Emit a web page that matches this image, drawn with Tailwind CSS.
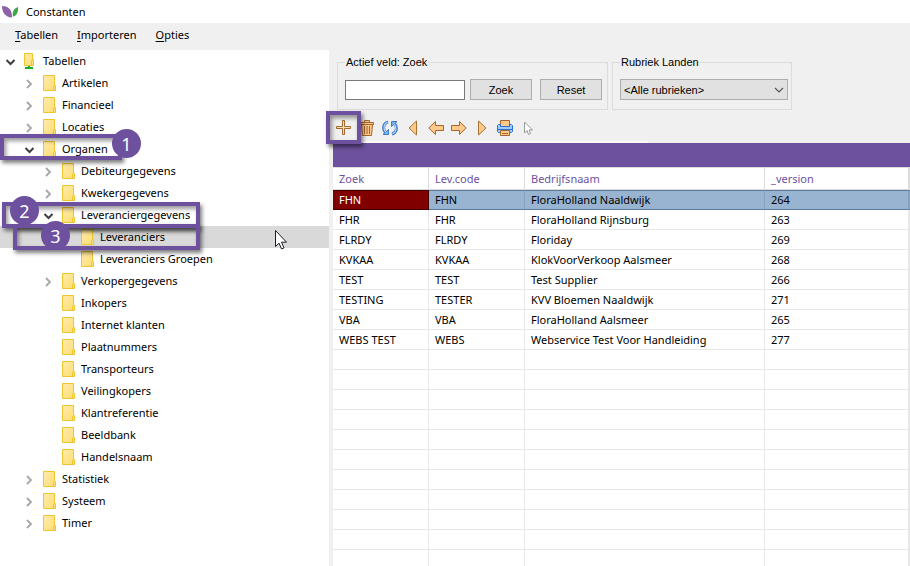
<!DOCTYPE html>
<html lang="nl">
<head>
<meta charset="utf-8">
<title>Constanten</title>
<meta name="viewport" content="width=device-width, initial-scale=1">
<script src="https://cdn.jsdelivr.net/npm/@tailwindcss/browser@4"></script>
</head>
<body class="relative flex h-screen flex-col overflow-hidden bg-white font-['Noto_Sans','Open_Sans',sans-serif] text-[11px] leading-4 text-black">

<svg class="absolute size-0" aria-hidden="true">
  <defs>
    <linearGradient id="fold" x1="0" y1="0" x2="1" y2="1"><stop offset="0" stop-color="#ffebae"/><stop offset="1" stop-color="#fddd70"/></linearGradient>
    <symbol id="folder" viewBox="0 0 13 16"><path d="M.5.5h11v10h1v5H.5z" fill="url(#fold)" stroke="#ecc52f"/><path d="M10.500 15.500v-4l1-1" fill="none" stroke="#ecc52f"/></symbol>
    <symbol id="root" viewBox="0 0 13 16"><path d="M.5.5h8v6h1v6h-9z" fill="url(#fold)" stroke="#ecc52f"/><path d="M7.500 12v-4l1-1" fill="none" stroke="#ecc52f"/><path d="M4 13h2v1h3v2H1v-2h3z" fill="#17b01c"/></symbol>
    <symbol id="closed" viewBox="0 0 10 10"><path d="M3 1l4 4-4 4" fill="none" stroke="#a6a6a6" stroke-width="1.800"/></symbol>
    <symbol id="open" viewBox="0 0 10 10"><path d="M1.500 3L5.500 7l4-4" fill="none" stroke="#404040" stroke-width="2"/></symbol>
  </defs>
</svg>

<header class="flex h-[23px] shrink-0 items-center gap-2 pl-0.5">
  <svg class="h-3 w-4" viewBox="0 0 16 12"><path d="M0 0c7 0 10 4 10 11.500C3 11 0 6.500 0 0z" fill="#8d62a8"/><path d="M16 1c.3 5.500-1 8.500-5 9.800C9.800 5.500 12 2 16 1z" fill="#3fa64a"/></svg>
  <h1>Constanten</h1>
</header>

<nav class="flex h-[27px] shrink-0 items-center gap-[19px] bg-[#f0f0f0] pb-1 pl-[15px]">
  <a href="#"><u class="underline-offset-2">T</u>abellen</a>
  <a href="#"><u class="underline-offset-2">I</u>mporteren</a>
  <a href="#"><u class="underline-offset-2">O</u>pties</a>
</nav>

<main class="flex min-h-0 flex-1 bg-[#f0f0f0]">
  <ul id="tree" class="w-[329px] shrink-0 overflow-hidden bg-white"></ul>

  <section class="flex min-w-0 flex-1 flex-col pl-1">
    <div class="flex shrink-0 gap-1 pt-1 pl-1 font-['Liberation_Sans',sans-serif] leading-4">
      <fieldset class="border border-[#dcdcdc] pr-[5px] pb-[9px] pl-[7px]">
        <legend class="px-px">Actief veld: Zoek</legend>
        <div class="flex items-center gap-2 pt-[9px]">
          <input aria-label="Actief veld: Zoek" class="-mr-[3px] h-5 w-[120px] border border-[#7a7a7a] bg-white px-1">
          <button class="h-[21px] w-[62px] border border-[#adadad] bg-[#e1e1e1]">Zoek</button>
          <button class="h-[21px] w-[62px] border border-[#adadad] bg-[#e1e1e1]">Reset</button>
        </div>
      </fieldset>
      <fieldset class="border border-[#dcdcdc] pr-[3px] pb-[9px] pl-[7px]">
        <legend class="px-px">Rubriek Landen</legend>
        <div class="relative pt-[9px]">
          <select aria-label="Rubriek Landen" class="block h-[21px] w-[168px] appearance-none border border-[#adadad] bg-[#e1e1e1] pl-[3px]"><option>&lt;Alle rubrieken&gt;</option></select>
          <svg class="pointer-events-none absolute right-1 bottom-1.5 h-2 w-2.5" viewBox="0 0 10 8"><path d="M1 2l4 4 4-4" fill="none" stroke="#555" stroke-width="1.200"/></svg>
        </div>
      </fieldset>
    </div>

    <div class="-ml-px flex h-[31px] shrink-0 items-center pt-1">
      <button aria-label="Toevoegen" class="flex w-[23px] justify-center"><svg class="h-4 w-4" viewBox="0 0 16 16"><path d="M6.500.5h2v6h6v2h-6v6h-2v-6h-6v-2h6z" fill="#ffe0b8" stroke="#a5662f"/></svg></button>
      <button aria-label="Verwijderen" class="flex w-[23px] justify-center"><svg class="h-4 w-4" viewBox="0 0 16 16" fill="#ffc98b" stroke="#a5662f"><path d="M5.500 2.500v-2h5v2M2.500 4.500h11l-1 11h-9z"/><path d="M1.500 2.500h13v2h-13z"/><path d="M5.500 6v8M8 6v8M10.500 6v8"/></svg></button>
      <button aria-label="Vernieuwen" class="flex w-[23px] justify-center"><svg class="h-4 w-4" viewBox="0 0 16 16" fill="none"><path d="M6 1.800C1 3.500.5 9 3.500 12.500M10 14.200c5-1.700 5.500-7.200 2.500-10.700" stroke="#3c7bcb" stroke-width="3"/><path d="M1 14.500h5.500V9.500zM15 1.500H9.500v5z" fill="#7fb2ec" stroke="#3c7bcb"/><path d="M5.500 2.300C1.500 4 1 9 3.800 12.300M10.500 13.700c4-1.700 4.500-6.700 1.700-10" stroke="#b4d6fa" stroke-width="1.200"/></svg></button>
      <button aria-label="Eerste" class="flex w-[23px] justify-center"><svg class="h-4 w-4" viewBox="0 0 16 16"><path d="M11.500 1v14L4 8z" fill="#ffc98b" stroke="#a5752f"/></svg></button>
      <button aria-label="Vorige" class="flex w-[23px] justify-center"><svg class="h-4 w-4" viewBox="0 0 16 16"><path d="M.8 8l6.700-6.500v4h8v5h-8v4z" fill="#ffc98b" stroke="#a5662f"/></svg></button>
      <button aria-label="Volgende" class="flex w-[23px] justify-center"><svg class="h-4 w-4" viewBox="0 0 16 16"><path d="M15.200 8L8.500 1.500v4h-8v5h8v4z" fill="#ffc98b" stroke="#a5662f"/></svg></button>
      <button aria-label="Laatste" class="flex w-[23px] justify-center"><svg class="h-4 w-4" viewBox="0 0 16 16"><path d="M4.500 1v14L12 8z" fill="#ffc98b" stroke="#a5752f"/></svg></button>
      <button aria-label="Afdrukken" class="flex w-[23px] justify-center"><svg class="h-4 w-4" viewBox="0 0 16 16"><path d="M3.500.5h9v6h-9z" fill="#ffc98b" stroke="#a5662f"/><path d="M1.500 4.500h2v2h9v-2h2l1 1v6l-1 1h-13l-1-1v-6z" fill="#9ccbff" stroke="#2f6fd0"/><path d="M1 9.500h14" stroke="#2f6fd0"/><path d="M3.500 10.500h9v5h-9z" fill="#ffc98b" stroke="#a5662f"/><path d="M5 13.500h6" stroke="#a5662f"/></svg></button>
      <button aria-label="Selecteren" class="flex w-[23px] justify-center"><svg class="h-4 w-4" viewBox="0 0 16 16"><path d="M4.500 2v11l2.500-2.500 1.500 4 2-1-1.500-3.500h3.500z" fill="#fff" stroke="#999"/></svg></button>
    </div>
    <div class="h-0.5 w-[315px] shrink-0 bg-[#fafafa]"></div>

    <div class="flex min-h-0 flex-1 flex-col overflow-hidden bg-white">
      <div class="h-6 shrink-0 bg-[#6d519e]"></div>
      <table class="w-full table-fixed border-separate border-spacing-0 text-left">
        <colgroup><col class="w-24"><col class="w-24"><col class="w-60"><col class="w-36"><col></colgroup>
        <thead><tr id="head"></tr></thead>
        <tbody id="rows"></tbody>
      </table>
    </div>
  </section>
</main>

<!-- Numbered step markers over the window -->
<div class="pointer-events-none absolute inset-0">
  <div class="absolute top-[134px] left-0 h-[26px] w-[122px] border-4 border-[#6d519e] shadow-[2px_3px_4px_rgba(0,0,0,.5),inset_2px_3px_4px_rgba(0,0,0,.4)]"></div>
  <div class="absolute top-[202px] left-0.5 h-[26px] w-[198px] border-4 border-[#6d519e] shadow-[2px_3px_4px_rgba(0,0,0,.5),inset_2px_3px_4px_rgba(0,0,0,.4)]"></div>
  <div class="absolute top-[224px] left-[13px] h-[26px] w-[187px] border-4 border-[#6d519e] shadow-[2px_3px_4px_rgba(0,0,0,.5),inset_2px_3px_4px_rgba(0,0,0,.4)]"></div>
  <div class="absolute top-[111px] left-[326px] h-[33px] w-[35px] border-4 border-[#6d519e] shadow-[2px_3px_4px_rgba(0,0,0,.5),inset_2px_3px_4px_rgba(0,0,0,.4)]"></div>
  <div class="absolute top-[129px] left-[112px] flex size-[29px] items-center justify-center rounded-full bg-[#6d519e] text-[18px] text-white">1</div>
  <div class="absolute top-[196px] left-[10px] flex size-[29px] items-center justify-center rounded-full bg-[#6d519e] text-[18px] text-white">2</div>
  <div class="absolute top-[221px] left-[41px] flex size-[29px] items-center justify-center rounded-full bg-[#6d519e] text-[18px] text-white">3</div>
  <svg class="absolute top-[230px] left-[275px] h-5 w-3" viewBox="0 0 12 20"><path d="M.5.5v16l3.500-3.400 2.500 5.800 2.500-1-2.500-5.700h5z" fill="#fff" stroke="#1c1c28"/></svg>
</div>

<script>
const tree = [[0,'Tabellen','open'],[1,'Artikelen','closed'],[1,'Financieel','closed'],[1,'Locaties','closed'],[1,'Organen','open'],[2,'Debiteurgegevens','closed'],[2,'Kwekergegevens','closed'],[2,'Leveranciergegevens','open'],[3,'Leveranciers'],[3,'Leveranciers Groepen'],[2,'Verkopergegevens','closed'],[2,'Inkopers'],[2,'Internet klanten'],[2,'Plaatnummers'],[2,'Transporteurs'],[2,'Veilingkopers'],[2,'Klantreferentie'],[2,'Beeldbank'],[2,'Handelsnaam'],[1,'Statistiek','closed'],[1,'Systeem','closed'],[1,'Timer','closed']];
const indent = ['pl-[5px]','pl-6','pl-[43px]','pl-[62px]'];
document.getElementById('tree').innerHTML = tree.map(([l,t,s]) =>
  `<li class="flex h-[22px] items-center ${indent[l]} ${t==='Leveranciers'?'bg-[#d9d9d9]':''}"><svg class="mt-0.5 mr-[9px] size-2.5 shrink-0">${s?`<use href="#${s}"/>`:''}</svg><svg class="mr-1.5 h-4 w-[13px] shrink-0"><use href="#${l?'folder':'root'}"/></svg><span>${t}</span></li>`).join('');
document.getElementById('head').innerHTML = ['Zoek','Lev.code','Bedrijfsnaam','_version',''].map(h =>
  `<th class="h-[23px] border-t border-r border-b border-[#dcdcdc] py-0 pl-1.5 font-normal text-[#6d519e]">${h}</th>`).join('');
const data = [['FHN','FHN','FloraHolland Naaldwijk','264'],['FHR','FHR','FloraHolland Rijnsburg','263'],['FLRDY','FLRDY','Floriday','269'],['KVKAA','KVKAA','KlokVoorVerkoop Aalsmeer','268'],['TEST','TEST','Test Supplier','266'],['TESTING','TESTER','KVV Bloemen Naaldwijk','271'],['VBA','VBA','FloraHolland Aalsmeer','265'],['WEBS TEST','WEBS','Webservice Test Voor Handleiding','277']];
while (data.length < 19) data.push(['','','','']);
document.getElementById('rows').innerHTML = data.map((r,i) => '<tr>' + [...r,''].map((c,j) => {
  const look = i ? 'border-[#e8e8e8]' : j ? 'border-t border-r-[#85a0bf] border-y-[#5c7a99] bg-[#99b4d1]' : 'border-t border-[#400000] bg-[#800000] text-white';
  return `<td class="h-5 border-r border-b py-0 pl-1.5 whitespace-nowrap ${look}">${c}</td>`;
}).join('') + '</tr>').join('');
</script>
</body>
</html>
